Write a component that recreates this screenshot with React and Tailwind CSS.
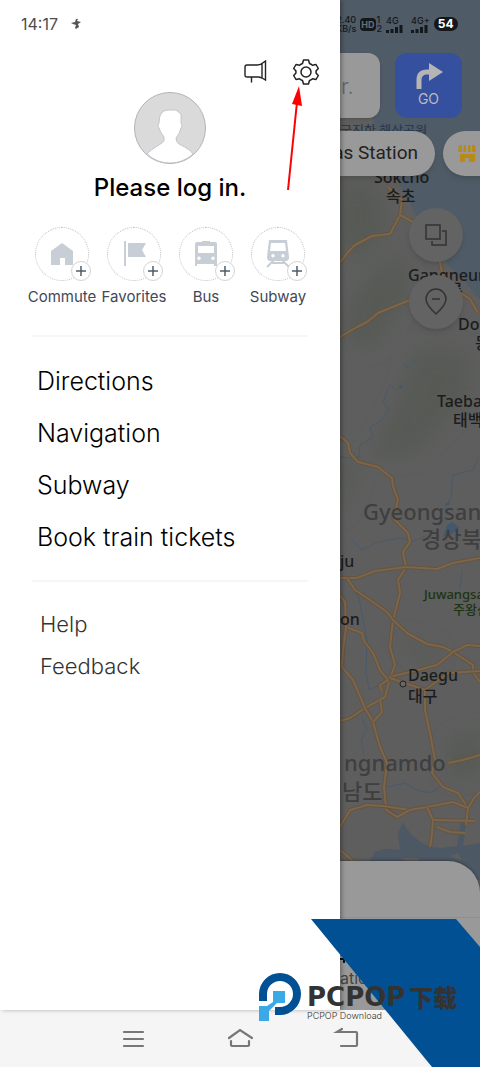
const shortcuts = [
    { id: 'commute', label: 'Commute' },
    { id: 'favorites', label: 'Favorites' },
    { id: 'bus', label: 'Bus' },
    { id: 'subway', label: 'Subway' },
];

const menu = ['Directions', 'Navigation', 'Subway', 'Book train tickets'];
const support = ['Help', 'Feedback'];

const labels = [
    { text: '국진항 해상공원', className: 'left-0 top-[122px] text-[13px] text-[#2c3c4e]' },
    { text: 'Sokcho', className: 'left-[34px] top-[167px] text-base' },
    { text: '속초', className: 'left-[46px] top-[186px] text-base' },
    { text: 'Gangneung', className: 'left-[68px] top-[265px] text-base' },
    { text: '릉', className: 'left-[108px] top-[280px] text-base' },
    { text: 'Donghae', className: 'left-[118px] top-[314px] text-base' },
    { text: '동해', className: 'left-[135px] top-[333px] text-base' },
    { text: 'Taebaek', className: 'left-[97px] top-[391px] text-base' },
    { text: '태백', className: 'left-[113px] top-[410px] text-base' },
    { text: 'Gyeongsangbuk', className: 'left-[23px] top-[497px] text-[22px] text-[#3f3f3f]' },
    { text: '경상북도', className: 'left-[81px] top-[524px] text-[22px] text-[#3f3f3f]' },
    { text: 'ju', className: 'left-0 top-[551px] text-base' },
    { text: 'Juwangsan', className: 'left-[84px] top-[586px] text-[13px] text-[#1d3312]' },
    { text: '주왕산', className: 'left-[113px] top-[601px] text-[13px] text-[#1d3312]' },
    { text: 'on', className: 'left-0 top-[609px] text-base' },
    { text: 'Daegu', className: 'left-[68px] top-[665px] text-base' },
    { text: '대구', className: 'left-[68px] top-[686px] text-base' },
    { text: 'ngnamdo', className: 'left-[4px] top-[748px] text-[22px] text-[#3f3f3f]' },
    { text: '남도', className: 'left-[2px] top-[777px] text-[22px] text-[#3f3f3f]' },
];

const roads = [
    'M48 187 62 200 60 215 50 234 32 236 15 245 8 252 0 263',
    'M60 215 73 222 90 240 100 263 104 282 130 299 138 313',
    'M0 337 17 327 27 322 38 313 50 308 70 300 98 290',
    'M0 436 8 443 10 453 18 462 38 467 52 478 53 486 58 500 53 518 68 533 70 542 63 552 66 567 58 580 60 593 53 620 50 647 55 665 50 678 45 697 25 708 10 718 0 721',
    'M0 578 17 578 35 571 66 567 97 569 113 563 140 558',
    'M7 578 15 590 30 600 47 612 53 620 67 633 87 644 103 647 113 652 133 665 133 672 140 682',
    'M45 678 70 672 97 665 113 652 127 645 140 646',
    'M0 595 5 602 6 627 22 633 24 641 33 653 40 670 48 680 40 685 42 692',
    'M6 627 3 650 2 667 13 680 25 708 33 722 40 747 47 763 44 787 46 808 57 817',
    'M40 700 42 712 33 722',
    'M50 678 85 690 108 673 140 671',
    'M85 690 85 710 90 733 95 760 92 773 103 787 118 793 128 808',
    'M0 827 10 810 27 805 43 806 70 810 87 807 113 802 128 808 134 798 140 792',
    'M45 809 57 817 70 810M87 807 93 820 92 834 90 847',
    'M93 820 135 821M97 827 110 832 125 833M128 808 126 825',
    'M108 763 123 760 140 755M0 850 13 861',
];

function MapCanvas() {
    return (
        <svg className="absolute top-0 left-0 h-[880px] w-[140px]" viewBox="0 0 140 880" fill="none" aria-hidden="true">
            <defs>
                <filter id="soft">
                    <feGaussianBlur stdDeviation="10" />
                </filter>
            </defs>
            <rect width="140" height="880" fill="#5e5e5e" />
            <g fill="#565a55" filter="url(#soft)">
                <path d="M0 180 40 190 45 230 20 260 0 250ZM10 300 60 250 70 290 30 350 5 340Z" />
                <path d="M75 350 125 350 130 395 95 430 75 455 30 455 60 400ZM0 455 18 470 0 520ZM55 635 100 650 90 665ZM110 740 140 730 140 770 110 780Z" />
            </g>
            <path d="M0 0H140V300L123 280 100 257 82 228 70 203 57 180 45 160 33 118 28 114 0 116Z" fill="#4f5b66" />
            <path d="M27 865 35 852 45 849 60 850 58 833 63 823 70 833 80 842 90 847 100 848 117 846 121 820 127 817 123 846 140 843V880H27Z" fill="#4c5864" />
            <path d="M60 858 78 858 82 868M110 856l8-3 4 8Z" fill="#5d5e5d" />
            <g stroke="#495a6b" strokeWidth="1">
                <path d="M78 357 67 368 64 363M66 380 56 390 50 385 43 402 49 410 42 420 30 427 33 437 20 445 19 457 8 458 0 457M139 457 133 470 113 475 111 498 104 510" />
                <path d="M11 539 22 550 38 542 60 538 73 541 86 536M7 578 19 598 23 620 27 640 26 672 29 690 38 686M43 700 27 706M22 718 27 730 21 740 24 755M47 787 65 783 77 790 90 793 104 785M122 570 120 590" />
            </g>
            <path d="M103 537 107 525 112 522 120 528 113 533ZM58 387l5-2-2 4ZM104 505l6-5-1 5Z" fill="#43586d" />
            {roads.map((d) => (
                <g key={d} strokeLinejoin="round">
                    <path d={d} stroke="#67543e" strokeWidth="4" />
                    <path d={d} stroke="#7a664d" strokeWidth="2" />
                </g>
            ))}
            <circle cx="63" cy="684" r="3" fill="#666" stroke="#222" />
        </svg>
    );
}

function ShortcutIcon({ id }) {
    return (
        <svg className="size-[28px]" viewBox="0 0 28 28" fill="#c8ced6" aria-hidden="true">
            {id === 'commute' && <path d="M14 3 25 11V25H17V18H12V25H3V11Z" />}
            {id === 'favorites' && <path d="M4 1H6V26H4ZM8 3H26L22 10 26 17H8Z" />}
            {id === 'bus' && (
                <path
                    fillRule="evenodd"
                    d="M10 1H18V2H23Q25 2 25 4V26H22V24H5V26H3V4Q3 2 5 2H10ZM6 6V13H22V6ZM7 16.500A1.700 1.700 0 1 0 7 20 1.700 1.700 0 0 0 7 16.500ZM21 16.500A1.700 1.700 0 1 0 21 20 1.700 1.700 0 0 0 21 16.500Z"
                />
            )}
            {id === 'subway' && (
                <>
                    <path
                        fillRule="evenodd"
                        d="M5 0H23L25 17Q25 21 22 21H6Q3 21 3 17ZM7 3 6 11H22L21 3ZM9 14A1.700 1.700 0 1 0 9 17.400 1.700 1.700 0 0 0 9 14ZM19 14A1.700 1.700 0 1 0 19 17.400 1.700 1.700 0 0 0 19 14Z"
                    />
                    <path d="M10 20 3 27M18 20 25 27M8 23H20" fill="none" stroke="#c8ced6" strokeWidth="2" />
                </>
            )}
        </svg>
    );
}

function Drawer() {
    return (
        <aside className="relative z-10 flex w-[340px] shrink-0 flex-col bg-white shadow-[2px_0_4px_rgba(0,0,0,0.3)]">
            <div className="flex h-[48px] items-center gap-3 pl-[21px] text-base text-[#4c4c4c]">
                <span>14:17</span>
                <svg className="size-[12px]" viewBox="0 0 12 12" aria-hidden="true">
                    <path d="M1 5 5 4 6 1 8 1 7 3 11 4 8 6 9 9 6 11 5 10 6 7 3 6Z" fill="#555" />
                </svg>
            </div>

            <div className="flex h-[44px] items-center justify-end gap-[26px] pr-[21px] pt-1">
                <button aria-label="Notices">
                    <svg className="h-[24px] w-[24px]" viewBox="0 0 24 24" fill="none" stroke="#222" strokeWidth="1.400" aria-hidden="true">
                        <path d="M19 3.500V18L16 17H4Q2 17 2 15V7Q2 5 4 5H14Q17 5 19 3.500ZM19 3.500 22.500 1V20L19 18M8.500 17V22.500" />
                    </svg>
                </button>
                <button aria-label="Settings">
                    <svg className="size-[26px]" viewBox="0 0 26 26" fill="none" stroke="#222" strokeWidth="1.500" strokeLinejoin="round" aria-hidden="true">
                        <circle cx="13" cy="13" r="5" />
                        <path d="M10.500 1H15.500L16.500 4.500Q18 5 19.500 6.300L23 5.500 25.300 9.500 23 12Q23.300 13 23 14L25.300 16.500 23 20.500 19.500 19.700Q18 21 16.500 21.500L15.500 25H10.500L9.500 21.500Q8 21 6.500 19.700L3 20.500.700 16.500 3 14Q2.700 13 3 12L.700 9.500 3 5.500 6.500 6.300Q8 5 9.500 4.500Z" />
                    </svg>
                </button>
            </div>

            <div className="flex flex-col items-center">
                <svg className="size-[72px]" viewBox="0 0 72 72" aria-hidden="true">
                    <circle cx="36" cy="36" r="35.500" fill="#dadada" stroke="#b0b3b8" />
                    <path
                        d="M13 62Q15 59 28 51Q31 49 30 45Q26 40 25 36Q23 34 25 31Q25 17 36 18H42L47 22V31Q49 34 47 36Q46 41 42 46Q42 50 45 52Q57 58 59 62Q49 71 36 71 23 71 13 62Z"
                        fill="#fff"
                        stroke="#b8bcc2"
                        strokeWidth="0.800"
                    />
                </svg>
                <a href="#login" className="mt-2 text-2xl leading-8 font-medium text-black">
                    Please log in.
                </a>
            </div>

            <ul className="mt-[23px] grid grid-cols-4 px-[26px]">
                {shortcuts.map(({ id, label }) => (
                    <li key={id}>
                        <button className="flex w-full flex-col items-center">
                            <span className="relative flex size-[54px] items-center justify-center rounded-full border border-dotted border-[#bbb]">
                                <ShortcutIcon id={id} />
                                <span className="absolute -right-[3px] -bottom-[1px] flex size-[20px] items-center justify-center rounded-full border border-[#d4d4d4] bg-white">
                                    <svg className="size-[12px]" viewBox="0 0 12 12" stroke="#525d69" strokeWidth="1.500" aria-hidden="true">
                                        <path d="M6 1V11M1 6H11" />
                                    </svg>
                                </span>
                            </span>
                            <span className="mt-1 text-[15px] leading-6 text-[#3f4956]">{label}</span>
                        </button>
                    </li>
                ))}
            </ul>

            <nav className="mx-[32px] mt-[26px] border-y-2 border-[#f5f5fa] pt-[18px] pb-[17px] pl-[5px]">
                {menu.map((item) => (
                    <a key={item} href="#menu" className="block text-[25px] leading-[52px] font-light text-black">
                        {item}
                    </a>
                ))}
            </nav>

            <nav className="mt-[21px] pl-[40px]">
                {support.map((item) => (
                    <a key={item} href="#support" className="block text-[22px] leading-[42px] font-light text-[#333]">
                        {item}
                    </a>
                ))}
            </nav>

            {/* pointer to the settings button */}
            <svg className="absolute top-[86px] left-[284px] h-[106px] w-[24px]" viewBox="0 0 24 106" aria-hidden="true">
                <path d="M4 104 13 16" stroke="#f00" strokeWidth="2" />
                <path d="M15 0 18 20 8 18Z" fill="#f00" />
            </svg>
        </aside>
    );
}

function Signal() {
    return (
        <svg className="h-[8px] w-[17px]" viewBox="0 0 17 8" fill="#15181b" aria-hidden="true">
            <path d="M0 5h3v3H0ZM4.500 4h3v4h-3ZM9 2h3v6H9ZM13.500 0h3v8h-3Z" />
        </svg>
    );
}

function MapPanel() {
    return (
        <main className="relative flex min-w-0 flex-1 flex-col overflow-hidden bg-[#5e5e5e]">
            <MapCanvas />
            <div className="font-['Noto_Sans','Noto_Sans_CJK_KR',sans-serif] font-medium text-[#1c1c1c]">
                {labels.map(({ text, className }) => (
                    <span key={text} className={`absolute leading-[1.3] whitespace-nowrap ${className}`}>
                        {text}
                    </span>
                ))}
            </div>

            <div className="relative flex h-[48px] shrink-0 items-center gap-1 text-[9px] leading-[9px] font-medium text-[#15181b]">
                <span className="-ml-1 text-center">
                    2.40
                    <br />
                    KB/s
                </span>
                <span className="flex items-center gap-px">
                    <span className="rounded-sm bg-[#15181b] px-px py-[2px] text-[9px] font-bold text-[#63707c]">HD</span>
                    <span>
                        1<br />2
                    </span>
                </span>
                <span className="flex flex-col">
                    4G
                    <Signal />
                </span>
                <span className="ml-1 flex flex-col">
                    4G+
                    <Signal />
                </span>
                <span className="rounded-full bg-[#15181b] px-1 py-px text-xs leading-[12px] font-bold text-white">54</span>
            </div>

            <div className="relative flex items-start gap-[15px] pt-[5px]">
                <input
                    type="text"
                    aria-label="Search"
                    placeholder="r."
                    className="h-[65px] w-[40px] rounded-r-xl bg-[#999] pl-px text-[22px] font-light shadow placeholder:text-[#666]"
                />
                <button className="flex h-[65px] w-[67px] flex-col items-center rounded-xl bg-[#35509f] pt-[10px] text-sm leading-[18px] text-[#bbb]">
                    <svg className="h-[27px] w-[28px]" viewBox="0 0 28 27" aria-hidden="true">
                        <path d="M4 26V17Q4 9 12 9H16" fill="none" stroke="#b5b5b5" strokeWidth="5" />
                        <path d="M14 0 28 9 14 18Z" fill="#b5b5b5" />
                    </svg>
                    GO
                </button>
            </div>

            <div className="relative mt-[13px] flex gap-2">
                <button className="flex h-[45px] w-[95px] shrink-0 items-center justify-end rounded-r-full bg-[#999] pr-[17px] font-['Roboto',sans-serif] text-[19px] whitespace-nowrap text-[#222] shadow-md">
                    as Station
                </button>
                <button aria-label="Store" className="flex h-[45px] w-[90px] shrink-0 items-center rounded-l-full bg-[#999] pl-[15px] shadow-md">
                    <svg className="h-[18px] w-[18px]" viewBox="0 0 18 18" fill="#b88a18" aria-hidden="true">
                        <path d="M1 0H4V7H0ZM6 0H8V7H5ZM10 0H12L13 7H10ZM14 0H17L18 7H14ZM2 9H17V17H11V13H7V17H2Z" />
                    </svg>
                </button>
            </div>

            <div className="relative mt-[32px] flex flex-col items-end gap-[13px] pr-[17px]">
                <button aria-label="Map layers" className="flex size-[54px] items-center justify-center rounded-full bg-[#636363] shadow-md">
                    <svg className="size-[22px]" viewBox="0 0 22 22" fill="none" stroke="#333" strokeWidth="1.500" aria-hidden="true">
                        <path d="M1 1H15V15H1ZM17 7H21V21H7V17" />
                    </svg>
                </button>
                <button aria-label="Places" className="flex size-[54px] items-center justify-center rounded-full bg-[#636363] shadow-md">
                    <svg className="h-[28px] w-[22px]" viewBox="0 0 22 28" fill="none" stroke="#333" strokeWidth="1.500" aria-hidden="true">
                        <path d="M11 26Q1 17 1 11A10 10 0 0 1 21 11Q21 17 11 26ZM7 11H15" />
                    </svg>
                </button>
            </div>

            <div className="relative mt-auto h-[149px] rounded-tr-[32px] bg-[#999] pt-[56px] text-[#444] shadow-[0_-1px_3px_rgba(0,0,0,0.3)]">
                <div className="border-t border-[#8f8f8f] pt-[36px] text-base">
                    <svg className="h-[12px] w-[12px]" viewBox="0 0 12 12" fill="none" stroke="#111" strokeWidth="2" aria-hidden="true">
                        <path d="M0 5H6M4 5V9" />
                    </svg>
                    <span className="block">ation</span>
                </div>
            </div>
        </main>
    );
}

function Watermark() {
    return (
        <div className="pointer-events-none absolute right-0 bottom-0 z-20 h-[148px] w-[221px] text-[#333]">
            <svg className="absolute inset-0" viewBox="0 0 221 148" aria-hidden="true">
                <path d="M52 0H197L221 28V148H173Z" fill="#005093" />
                <path d="M0 82V75A21 21 0 0 1 42 75 21 21 0 0 1 21 96H16V88H21A13 13 0 1 0 8 75V82Z" fill="#005093" />
                <path d="M14 72H26V84H18L10 92V102H0V87H8L14 83Z" fill="#3aa9e6" />
            </svg>
            <div className="relative flex flex-col pt-[64px] pl-[48px]">
                <div className="flex items-center gap-1 font-bold">
                    <span className="font-['DejaVu_Sans',sans-serif] text-[26px] leading-7">PCPOP</span>
                    <span className="font-['Noto_Sans_CJK_SC',sans-serif] text-2xl leading-7 font-black">下载</span>
                </div>
                <span className="text-[9px] leading-[9px] font-light">PCPOP Download</span>
            </div>
        </div>
    );
}

function BottomBar() {
    const icons = [
        { name: 'Recent apps', d: 'M5 7H24M5 14H24M5 21H24' },
        { name: 'Home', d: 'M3 13 14 5 26 13M5 16V20Q5 21 7 21H21Q23 21 23 20V16' },
        { name: 'Back', d: 'M9 4 4 7H23Q24 7 24 8V20Q24 21 23 21H8' },
    ];
    return (
        <footer className="flex h-[57px] shrink-0 items-center justify-center gap-[79px] bg-[#f5f5f5]">
            {icons.map(({ name, d }) => (
                <button key={name} aria-label={name}>
                    <svg className="size-[28px]" viewBox="0 0 28 28" fill="none" stroke="#777" strokeWidth="2.200" strokeLinecap="round" aria-hidden="true">
                        <path d={d} />
                    </svg>
                </button>
            ))}
        </footer>
    );
}

export default function App() {
    return (
        <div className="relative flex min-h-screen flex-col overflow-hidden bg-white font-['Inter',sans-serif]">
            <div className="flex flex-1">
                <Drawer />
                <MapPanel />
            </div>
            <BottomBar />
            <Watermark />
        </div>
    );
}
